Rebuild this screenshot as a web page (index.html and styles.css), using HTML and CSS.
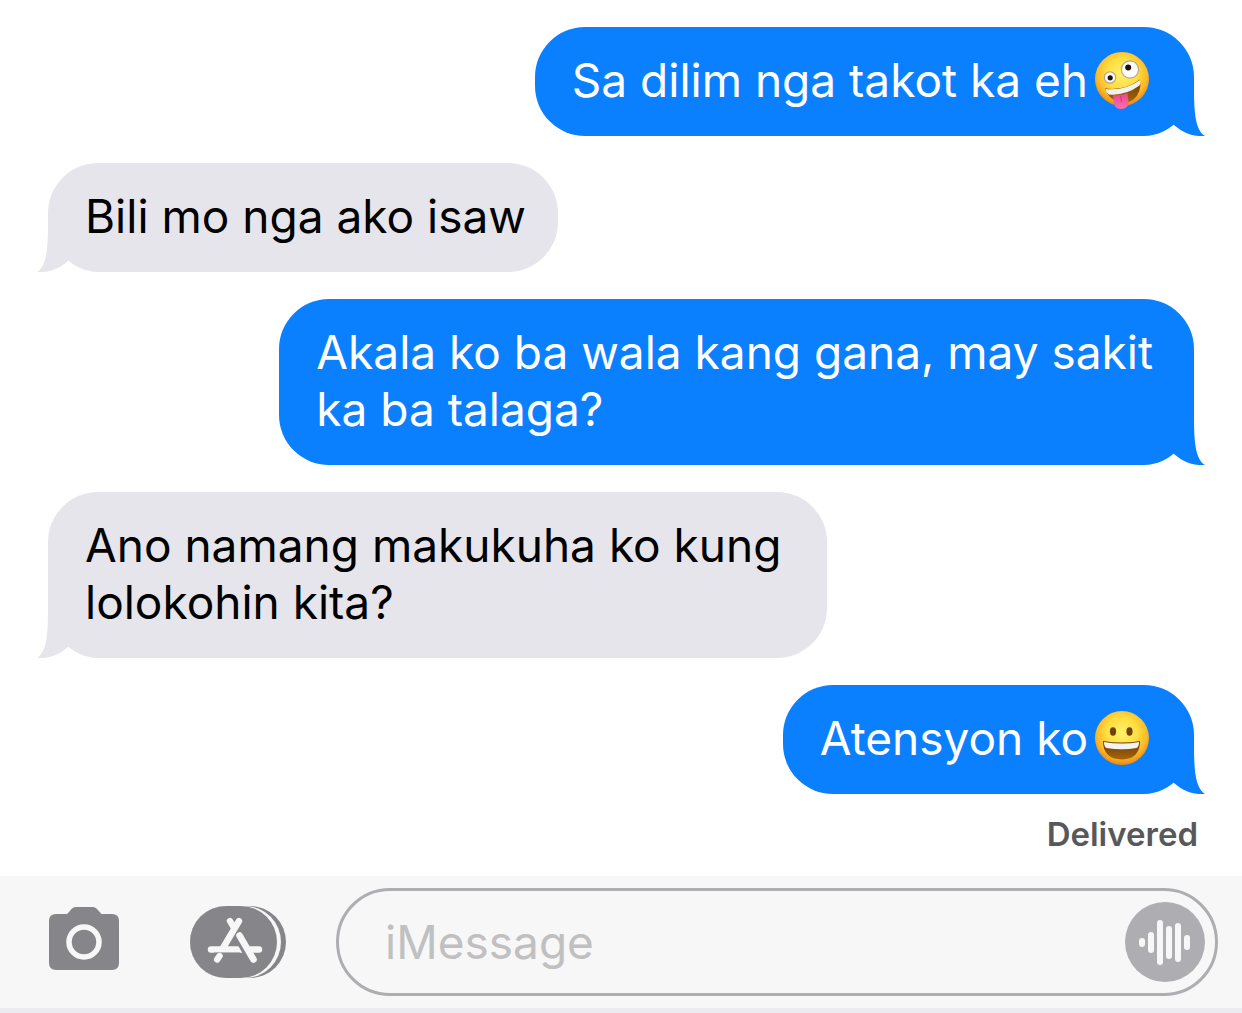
FILE: index.html
```html
<!DOCTYPE html>
<html lang="tl">
<head>
  <meta charset="utf-8">
  <meta name="viewport" content="width=device-width, initial-scale=1">
  <title>Messages</title>
  <link rel="stylesheet" href="styles.css">
</head>
<body>
  <svg class="defs" width="0" height="0" aria-hidden="true">
    <defs>
      <radialGradient id="face" cx="0.5" cy="0.4" r="0.62">
        <stop offset="0" stop-color="#fff06a"/>
        <stop offset="0.45" stop-color="#ffdf42"/>
        <stop offset="0.75" stop-color="#fcb928"/>
        <stop offset="1" stop-color="#e8820c"/>
      </radialGradient>
      <linearGradient id="mouth" x1="0" y1="0" x2="0" y2="1">
        <stop offset="0" stop-color="#6b3a05"/>
        <stop offset="1" stop-color="#a5650c"/>
      </linearGradient>
      <linearGradient id="tongue" x1="0" y1="0" x2="0" y2="1">
        <stop offset="0" stop-color="#e8478f"/>
        <stop offset="1" stop-color="#ff6fae"/>
      </linearGradient>
    </defs>
  </svg>

  <main class="thread">
    <div class="bubble sent">
      <p>Sa dilim nga takot ka eh</p>
      <svg class="emoji" viewBox="0 0 56 57" role="img" aria-label="zany face">
        <circle cx="28" cy="27" r="27" fill="url(#face)"/>
        <circle cx="16" cy="25.500" r="5.700" fill="#fff" stroke="#b9a48d" stroke-width="1.200"/>
        <circle cx="16.200" cy="25.800" r="2.600" fill="#20120a"/>
        <circle cx="36" cy="17.500" r="8.600" fill="#fff" stroke="#b9a48d" stroke-width="1.200"/>
        <circle cx="34.200" cy="15.500" r="3" fill="#20120a"/>
        <path d="M11 36.500Q31 39 46 27.500Q48 41 39 48Q33 52 25 50Q14 47 11 36.500Z" fill="url(#mouth)"/>
        <path d="M11.500 37Q31 39 46 28Q47 31 45.500 33.500Q31 44 15 42.500Q12 41 11.500 37Z" fill="#f3f1ee"/>
        <path d="M19 43Q26 44 33.500 41L34.500 50Q34 57 27.500 57Q21 57 20 51Z" fill="url(#tongue)"/>
        <path d="M26.500 44L27.500 50" stroke="#cf3577" stroke-width="1" fill="none"/>
      </svg>
      <svg class="tail" viewBox="0 0 36 60" aria-hidden="true"><path d="M25 0V10C25 35 26 54 36 60C23 61 12 56 3 47Z"/></svg>
    </div>

    <div class="bubble received">
      <p>Bili mo nga ako isaw</p>
      <svg class="tail" viewBox="0 0 36 60" aria-hidden="true"><path d="M25 0V10C25 35 26 54 36 60C23 61 12 56 3 47Z"/></svg>
    </div>

    <div class="bubble sent multiline">
      <p>Akala ko ba wala kang gana, may sakit<br>ka ba talaga?</p>
      <svg class="tail" viewBox="0 0 36 60" aria-hidden="true"><path d="M25 0V10C25 35 26 54 36 60C23 61 12 56 3 47Z"/></svg>
    </div>

    <div class="bubble received multiline">
      <p>Ano namang makukuha ko kung<br>lolokohin kita?</p>
      <svg class="tail" viewBox="0 0 36 60" aria-hidden="true"><path d="M25 0V10C25 35 26 54 36 60C23 61 12 56 3 47Z"/></svg>
    </div>

    <div class="bubble sent">
      <p>Atensyon ko</p>
      <svg class="emoji" viewBox="0 0 56 57" role="img" aria-label="grinning face">
        <circle cx="28" cy="28" r="27" fill="url(#face)"/>
        <ellipse cx="19" cy="21.500" rx="3.100" ry="4.200" fill="#70410b"/>
        <ellipse cx="35.500" cy="21.500" rx="3.100" ry="4.200" fill="#70410b"/>
        <path d="M9 31Q28 34 46 31Q46 49 28 49.500Q9 49 9 31Z" fill="url(#mouth)"/>
        <path d="M10 32Q28 35 45 32Q45 37 42.500 38Q28 40.500 12.500 38Q10 37 10 32Z" fill="#f5f3f1"/>
      </svg>
      <svg class="tail" viewBox="0 0 36 60" aria-hidden="true"><path d="M25 0V10C25 35 26 54 36 60C23 61 12 56 3 47Z"/></svg>
    </div>

    <p class="status">Delivered</p>
  </main>

  <form class="composer">
    <button class="tool camera" type="button" aria-label="Camera">
      <svg width="70" height="63" viewBox="0 0 70 63" aria-hidden="true">
        <path d="M7 7H17Q18.500 7 19.500 5.500L23 1.500Q24.500 0 26.500 0H44Q46 0 47.500 1.500L52.500 7H63Q70 7 70 14V56Q70 63 63 63H7Q0 63 0 56V14Q0 7 7 7Z" fill="#868589"/>
        <circle cx="35" cy="35" r="15" fill="none" stroke="#f7f7f8" stroke-width="5.500"/>
      </svg>
    </button>
    <button class="tool apps" type="button" aria-label="Apps">
      <svg width="96" height="72" viewBox="0 0 96 72" aria-hidden="true">
        <rect width="96" height="72" rx="36" fill="#868589"/>
        <rect width="91" height="72" rx="36" fill="#f7f7f8"/>
        <rect width="87" height="72" rx="36" fill="#868589"/>
        <g fill="none" stroke="#f7f7f8" stroke-width="6.400" stroke-linecap="round">
          <path d="M40 15L43.500 21"/>
          <path d="M49 15L33 42"/>
          <path d="M21 43.500H69"/>
        </g>
        <path d="M45.500 31L57 51" stroke="#868589" stroke-width="4" fill="none"/>
        <path d="M24 47.300H50" stroke="#868589" stroke-width="1.500" fill="none"/>
        <path d="M49.500 29.500L63.500 53.500" stroke="#f7f7f8" stroke-width="6.600" stroke-linecap="round" fill="none"/>
        <path d="M29.500 50L27.200 53.500" stroke="#f7f7f8" stroke-width="6.400" stroke-linecap="round" fill="none"/>
      </svg>
    </button>
    <div class="field">
      <input type="text" placeholder="iMessage" aria-label="iMessage">
      <button class="voice" type="button" aria-label="Record audio">
        <svg width="80" height="80" viewBox="0 0 80 80" aria-hidden="true">
          <circle cx="40" cy="40" r="40" fill="#aeadb2"/>
          <g fill="#f7f7f8">
            <rect x="14" y="36" width="6" height="9" rx="3"/>
            <rect x="23" y="30" width="6" height="21" rx="3"/>
            <rect x="32" y="18" width="6" height="45" rx="3"/>
            <rect x="41" y="24" width="6" height="33" rx="3"/>
            <rect x="50" y="21" width="6" height="39" rx="3"/>
            <rect x="59" y="33" width="6" height="15" rx="3"/>
          </g>
        </svg>
      </button>
    </div>
  </form>
</body>
</html>
```
FILE: styles.css
```css
* {
  box-sizing: border-box;
}

body {
  margin: 0;
  min-height: 100vh;
  display: flex;
  flex-direction: column;
  background: #ebebf0;
  font-family: Inter, "Liberation Sans", sans-serif;
}

p {
  margin: 0;
}

button {
  padding: 0;
  border: 0;
  background: none;
}

svg {
  display: block;
}

.defs {
  position: absolute;
}

.thread {
  display: flex;
  flex-direction: column;
  align-items: flex-start;
  gap: 27px;
  padding: 27px 48px 22px;
  background: #fff;
}

.bubble {
  position: relative;
  display: flex;
  align-items: center;
  gap: 6px;
  padding: 25px 32px 27px 37px;
  border-radius: 50px;
  font-size: 46px;
  line-height: 57px;
}

.sent {
  align-self: flex-end;
  background: #0b80ff;
  color: #fff;
  border-bottom-right-radius: 50px 58px;
}

.received {
  background: #e6e5eb;
  color: #000;
  border-bottom-left-radius: 50px 58px;
}

.sent:has(.emoji) {
  padding-right: 44px;
}

.sent.multiline {
  padding-right: 41px;
}

.received.multiline {
  padding-right: 46px;
}

.emoji {
  width: 56px;
  height: 57px;
}

.tail {
  position: absolute;
  right: -11px;
  bottom: 0;
  width: 36px;
  height: 60px;
  fill: #0b80ff;
}

.received .tail {
  right: auto;
  left: -11px;
  transform: scaleX(-1);
  fill: #e6e5eb;
}

.status {
  align-self: flex-end;
  margin-right: -4px;
  margin-top: -7px;
  font-size: 33px;
  font-weight: 600;
  line-height: 40px;
  color: #58585a;
}

.composer {
  display: flex;
  align-items: center;
  padding: 12px 24px 12px 49px;
  background: #f7f7f8;
}

.camera {
  margin-bottom: 8px;
}

.apps {
  margin: 0 50px 0 71px;
}

.field {
  flex: 1;
  display: flex;
  align-items: center;
  height: 108px;
  padding: 0 10px 0 46px;
  border: 3px solid #aeaeb2;
  border-radius: 54px;
}

.field input {
  flex: 1;
  min-width: 0;
  padding: 0;
  border: 0;
  outline: 0;
  background: none;
  font: inherit;
  font-size: 46px;
  line-height: 57px;
  color: #000;
}

.field input::placeholder {
  color: #c0c0c1;
  opacity: 1;
}
```
